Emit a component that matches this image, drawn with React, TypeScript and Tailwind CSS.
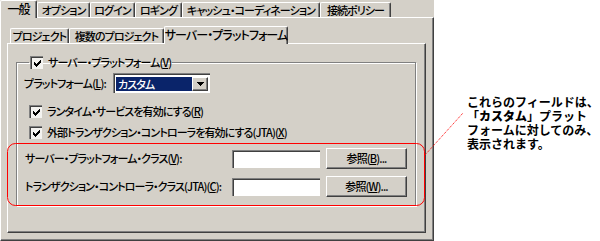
import type { ReactNode } from 'react';

const outerTabs = [
    { label: '一般', w: 'w-[37px]' },
    { label: 'オプション', w: 'w-[53px]' },
    { label: 'ログイン', w: 'w-[45px]' },
    { label: 'ロギング', w: 'w-[47px]' },
    { label: 'キャッシュ・コーディネーション', w: 'w-[138px]' },
    { label: '接続ポリシー', w: 'w-[71px]' },
];

const innerTabs = [
    { label: 'プロジェクト', w: 'w-[59px]' },
    { label: '複数のプロジェクト', w: 'w-[95px]' },
    { label: 'サーバー・プラットフォーム', w: 'w-[124px]' },
];

function Tab({ label, active, w }: { label: string; active: boolean; w: string }) {
    return (
        <div
            className={`${w} shrink-0 flex items-center justify-center whitespace-nowrap border-t border-l border-white border-r border-r-[#404040] shadow-[inset_-1px_0_0_#808080] rounded-t-[2px] bg-[#d4d0c8] ${
                active ? 'relative z-10 h-[18px] -mb-px pb-[2px] text-[12px]' : 'h-[15px]'
            }`}
        >
            {label}
        </div>
    );
}

function Mn({ children }: { children: ReactNode }) {
    return <span className="underline underline-offset-[1px]">{children}</span>;
}

function CheckBox() {
    return (
        <div className="w-[13px] h-[13px] shrink-0 border-t border-l border-[#808080] border-b-white border-r-white shadow-[inset_1px_1px_0_#404040] bg-[#f4f3f0] flex items-center justify-center">
            <svg width="7" height="7" viewBox="0 0 7 7" className="mt-px ml-px">
                <path d="M0 2h1v1h1v1h1v-1h1v-1h1v-1h1v-1h1v3h-1v1h-1v1h-1v1h-1v1h-1v-1h-1v-1h-1v-1h-1z" fill="#000" />
            </svg>
        </div>
    );
}

function Field() {
    return (
        <div className="w-[88px] h-[18px] shrink-0 border-t border-l border-[#808080] border-b-white border-r-white shadow-[inset_1px_1px_0_#404040] bg-white" />
    );
}

function Btn({ children }: { children: ReactNode }) {
    return (
        <div className="w-[81px] h-[21px] flex items-center justify-center border-t border-l border-white border-r border-b border-r-[#404040] border-b-[#404040] shadow-[inset_-1px_-1px_0_#808080]">
            {children}
        </div>
    );
}

export default function App() {
    return (
        <div className="relative w-[600px] h-[241px] flex bg-white text-black text-[11px] leading-none whitespace-nowrap font-['Noto_Sans_CJK_JP',sans-serif] [font-feature-settings:'palt'] overflow-hidden">
            {/* Dialog */}
            <div className="w-[434px] h-[241px] bg-[#d4d0c8] flex flex-col tracking-[-0.9px] font-medium">
                <div className="flex items-end h-[17px]">
                    {outerTabs.map((t, i) => (
                        <Tab key={t.label} label={t.label} w={t.w} active={i === 0} />
                    ))}
                </div>
                <div className="h-[224px] border-t border-l border-white border-r border-b border-r-[#404040] border-b-[#404040] shadow-[inset_-1px_-1px_0_#808080] pt-[8px] pl-[6px] pr-[7px] pb-[7px] flex flex-col">
                    <div className="flex items-end h-[17px] pl-[3px]">
                        {innerTabs.map((t, i) => (
                            <Tab key={t.label} label={t.label} w={t.w} active={i === 2} />
                        ))}
                    </div>
                    <div className="flex-1 border-t border-l border-white border-r border-b border-r-[#404040] border-b-[#404040] shadow-[inset_-1px_-1px_0_#808080] pl-[8px] pt-[12px]">
                        <fieldset className="w-[400px] border border-[#808080] shadow-[inset_1px_1px_0_white,1px_1px_0_white] pl-[7px] pb-[8px]">
                            <legend className="ml-[5px] px-[1px] flex items-center gap-[5px] h-[13px]">
                                <CheckBox />
                                <span>
                                    サーバー・プラットフォーム(<Mn>V</Mn>)
                                </span>
                            </legend>

                            <div className="mt-[4px] h-[20px] flex items-center">
                                <span className="w-[89px]">
                                    プラットフォーム(<Mn>L</Mn>):
                                </span>
                                <div className="w-[97px] h-[20px] border-t border-l border-[#808080] border-b-white border-r-white shadow-[inset_1px_1px_0_#404040] bg-white flex p-[2px]">
                                    <div className="flex-1 bg-[#0a246a] text-white flex items-center pl-[2px] mt-px">カスタム</div>
                                    <div className="w-[16px] border-t border-l border-white border-r border-b border-r-[#404040] border-b-[#404040] shadow-[inset_-1px_-1px_0_#808080] bg-[#d4d0c8] flex items-center justify-center mt-px">
                                        <svg width="7" height="4" viewBox="0 0 7 4">
                                            <path d="M0 0h7v1h-1v1h-1v1h-1v1h-1v-1h-1v-1h-1v-1h-1z" fill="#000" />
                                        </svg>
                                    </div>
                                </div>
                            </div>

                            <div className="mt-[10px] h-[16px] flex items-center gap-[5px] pl-[5px]">
                                <CheckBox />
                                <span>
                                    ランタイム・サービスを有効にする(<Mn>R</Mn>)
                                </span>
                            </div>
                            <div className="mt-[5px] h-[16px] flex items-center gap-[5px] pl-[5px]">
                                <CheckBox />
                                <span>
                                    外部トランザクション・コントローラを有効にする(JTA)(<Mn>X</Mn>)
                                </span>
                            </div>

                            <div className="mt-[8px] h-[21px] flex items-center pl-[1px]">
                                <span className="w-[207px]">
                                    サーバー・プラットフォーム・クラス(<Mn>V</Mn>):
                                </span>
                                <Field />
                                <div className="ml-[6px]">
                                    <Btn>
                                        参照(<Mn>B</Mn>)...
                                    </Btn>
                                </div>
                            </div>
                            <div className="mt-[7px] h-[21px] flex items-center pl-[1px]">
                                <span className="w-[207px]">
                                    トランザクション・コントローラ・クラス(JTA)(<Mn>C</Mn>):
                                </span>
                                <Field />
                                <div className="ml-[6px]">
                                    <Btn>
                                        参照(<Mn>W</Mn>)...
                                    </Btn>
                                </div>
                            </div>
                        </fieldset>
                    </div>
                </div>
            </div>

            {/* Callout */}
            <div className="flex-1 pl-[33px] pt-[95px] text-[12px] leading-[14px] font-semibold [font-feature-settings:normal]">
                <div>これらのフィールドは、</div>
                <div>
                    「<span className="font-black">カスタム</span>」プラット
                </div>
                <div>フォームに対してのみ、</div>
                <div>表示されます。</div>
            </div>

            {/* Highlight overlay */}
            <svg className="absolute inset-0 pointer-events-none" width="600" height="241">
                <rect x="7.5" y="143.5" width="417" height="62" rx="8" fill="none" stroke="#ff0000" />
                <line x1="425" y1="155" x2="463" y2="113" stroke="#ff0000" strokeDasharray="1 1" />
            </svg>
        </div>
    );
}
